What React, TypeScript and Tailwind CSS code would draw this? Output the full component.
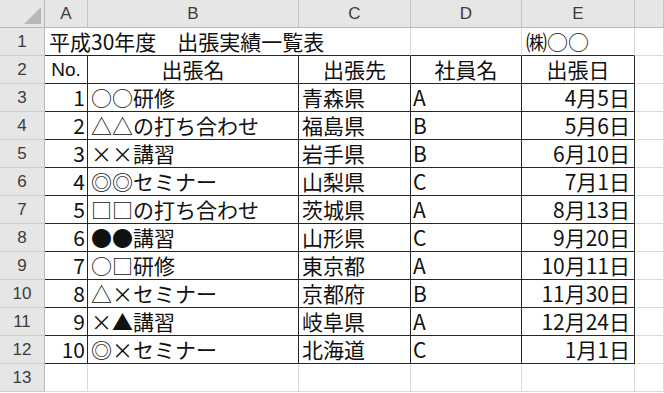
import React from "react";

type Row = {
  no: string;
  name: string;
  place: string;
  staff: string;
  date: string;
};

const rows: Row[] = [
  { no: "1", name: "○○研修", place: "青森県", staff: "A", date: "4月5日" },
  { no: "2", name: "△△の打ち合わせ", place: "福島県", staff: "B", date: "5月6日" },
  { no: "3", name: "××講習", place: "岩手県", staff: "B", date: "6月10日" },
  { no: "4", name: "◎◎セミナー", place: "山梨県", staff: "C", date: "7月1日" },
  { no: "5", name: "□□の打ち合わせ", place: "茨城県", staff: "A", date: "8月13日" },
  { no: "6", name: "●●講習", place: "山形県", staff: "C", date: "9月20日" },
  { no: "7", name: "○□研修", place: "東京都", staff: "A", date: "10月11日" },
  { no: "8", name: "△×セミナー", place: "京都府", staff: "B", date: "11月30日" },
  { no: "9", name: "×▲講習", place: "岐阜県", staff: "A", date: "12月24日" },
  { no: "10", name: "◎×セミナー", place: "北海道", staff: "C", date: "1月1日" },
];

const grid = "grid grid-cols-[45px_43px_211px_112px_111px_113px_29px]";
const rowHead =
  "h-[28px] flex items-center justify-center bg-[#e6e6e6] border-r border-b border-r-[#b9b9b9] border-b-[#cdcdcd] text-[#3c3c3c] text-[17px] font-['Liberation_Sans',sans-serif]";
const cell = "h-[28px] flex items-center border-r border-b border-[#dadada] whitespace-nowrap";
const boxed = "h-[28px] flex items-center border-r border-b border-[#262626] whitespace-nowrap";

export default function App() {
  return (
    <div className="w-[664px] h-[393px] overflow-hidden bg-white text-[21px] text-[#111] font-['Noto_Sans_CJK_JP',sans-serif] leading-none">
      {/* column headers */}
      <div className={grid}>
        <div className="h-[28px] bg-[#e6e6e6] border-r border-b border-r-[#b9b9b9] border-b-[#b9b9b9] flex items-end justify-end p-[3px]">
          <div className="w-0 h-0 border-l-[17px] border-t-[17px] border-l-transparent border-t-transparent border-r-[0px] border-b-0 border-[#b4b4b4] relative">
            <svg width="17" height="17" className="absolute right-0 bottom-0">
              <polygon points="17,0 17,17 0,17" fill="#b8b8b8" />
            </svg>
          </div>
        </div>
        {["A", "B", "C", "D", "E", ""].map((c, i) => (
          <div
            key={i}
            className="h-[28px] flex items-center justify-center bg-[#e6e6e6] border-r border-b border-r-[#c4c4c4] border-b-[#b9b9b9] text-[#3c3c3c] text-[17px] font-['Liberation_Sans',sans-serif]"
          >
            {c}
          </div>
        ))}
      </div>

      {/* row 1 */}
      <div className={grid}>
        <div className={rowHead}>1</div>
        <div className="col-span-3 h-[28px] flex items-center border-r border-b border-r-[#dadada] border-b-[#262626] pl-[4px] whitespace-nowrap">
          平成30年度　出張実績一覧表
        </div>
        <div className="h-[28px] border-r border-b border-r-[#dadada] border-b-[#262626]" />
        <div className="h-[28px] flex items-center border-r border-b border-r-[#dadada] border-b-[#262626] pl-[4px] whitespace-nowrap">
          ㈱○○
        </div>
        <div className={cell} />
      </div>

      {/* row 2 */}
      <div className={grid}>
        <div className={rowHead}>2</div>
        <div className={`${boxed} justify-center font-['Liberation_Sans_Narrow','Liberation_Sans',sans-serif] text-[19px]`}>No.</div>
        <div className={`${boxed} justify-center`}>出張名</div>
        <div className={`${boxed} justify-center`}>出張先</div>
        <div className={`${boxed} justify-center`}>社員名</div>
        <div className={`${boxed} justify-center`}>出張日</div>
        <div className={cell} />
      </div>

      {rows.map((r, i) => (
        <div key={r.no} className={grid}>
          <div className={rowHead}>{i + 3}</div>
          <div className={`${boxed} justify-end pr-[2px]`}>{r.no}</div>
          <div className={`${boxed} pl-[3px]`}>{r.name}</div>
          <div className={`${boxed} pl-[3px]`}>{r.place}</div>
          <div className={`${boxed} pl-[2px]`}>{r.staff}</div>
          <div className={`${boxed} justify-end pr-[4px]`}>{r.date}</div>
          <div className={cell} />
        </div>
      ))}

      {/* row 13 */}
      <div className={grid}>
        <div className={rowHead}>13</div>
        <div className={cell} />
        <div className={cell} />
        <div className={cell} />
        <div className={cell} />
        <div className={cell} />
        <div className={cell} />
      </div>
    </div>
  );
}
